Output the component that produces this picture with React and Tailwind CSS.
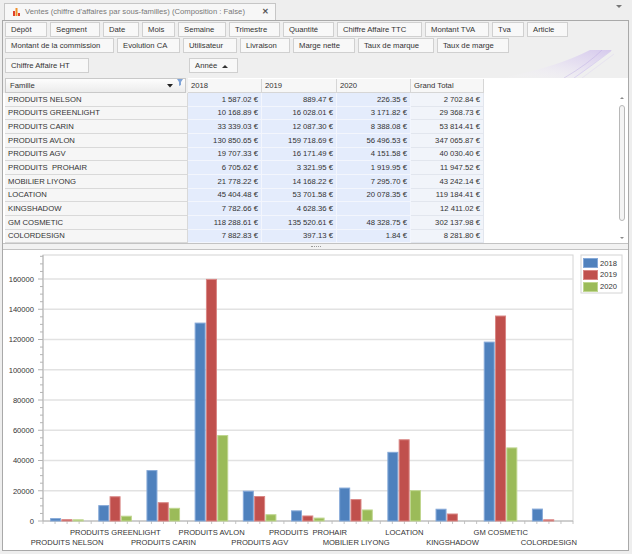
import React from 'react'

const ROW1 = [
  ['Dépôt', 'w-[42px]'],
  ['Segment', 'w-[50px]'],
  ['Date', 'w-[36px]'],
  ['Mois', 'w-[33px]'],
  ['Semaine', 'w-[48px]'],
  ['Trimestre', 'w-[51px]'],
  ['Quantité', 'w-[51px]'],
  ['Chiffre Affaire TTC', 'w-[85px]'],
  ['Montant TVA', 'w-[64px]'],
  ['Tva', 'w-[32px]'],
  ['Article', 'w-[41px]'],
]

const ROW2 = [
  ['Montant de la commission', 'w-[109px]'],
  ['Evolution CA', 'w-[63px]'],
  ['Utilisateur', 'w-[54px]'],
  ['Livraison', 'w-[50px]'],
  ['Marge nette', 'w-[62px]'],
  ['Taux de marque', 'w-[76px]'],
  ['Taux de marge', 'w-[72px]'],
]

const DATA = [
  ['PRODUITS NELSON', 1587.02, 889.47, 226.35, 2702.84],
  ['PRODUITS GREENLIGHT', 10168.89, 16028.01, 3171.82, 29368.73],
  ['PRODUITS CARIN', 33339.03, 12087.3, 8388.08, 53814.41],
  ['PRODUITS AVLON', 130850.65, 159718.69, 56496.53, 347065.87],
  ['PRODUITS AGV', 19707.33, 16171.49, 4151.58, 40030.4],
  ['PRODUITS  PROHAIR', 6705.62, 3321.95, 1919.95, 11947.52],
  ['MOBILIER LIYONG', 21778.22, 14168.22, 7295.7, 43242.14],
  ['LOCATION', 45404.48, 53701.58, 20078.35, 119184.41],
  ['KINGSHADOW', 7782.66, 4628.36, null, 12411.02],
  ['GM COSMETIC', 118288.61, 135520.61, 48328.75, 302137.98],
  ['COLORDESIGN', 7882.83, 397.13, 1.84, 8281.8],
]

const SERIES = [
  { year: '2018', fill: '#4f81bd', edge: '#86a9d8' },
  { year: '2019', fill: '#c0504d', edge: '#d98684' },
  { year: '2020', fill: '#9bbb59', edge: '#bfd68f' },
]

// heights that add up to 150px for the 11 rows
const ROW_H = ['h-[14px]', 'h-[13px]', 'h-[14px]']

function fmt(v) {
  if (v == null) return ''
  const [i, d] = v.toFixed(2).split('.')
  return `${i.replace(/\B(?=(\d{3})+(?!\d))/g, ' ')}.${d} €`
}

function Btn({ label, w }) {
  return (
    <div
      className={`${w} h-[15px] shrink-0 border border-[#d0d0d0] bg-[#f8f8f8] pl-[5px] text-[7.7px] leading-[13px] text-[#333] whitespace-nowrap`}
    >
      {label}
    </div>
  )
}

function Swoosh() {
  return (
    <svg width="130" height="28" className="absolute right-[8px] top-[29px] pointer-events-none">
      <defs>
        <linearGradient id="sw" x1="0" y1="1" x2="1" y2="0">
          <stop offset="0" stopColor="#ffffff" stopOpacity="0" />
          <stop offset="0.6" stopColor="#ded3f2" stopOpacity="0.55" />
          <stop offset="1" stopColor="#cdbdec" stopOpacity="0.75" />
        </linearGradient>
      </defs>
      <path d="M10 28 Q65 18 100 0 L122 0 Q100 16 86 28 Z" fill="url(#sw)" />
      <path d="M74 28 Q98 14 112 0" stroke="#b7a5e2" strokeOpacity="0.5" strokeWidth="0.8" fill="none" />
      <path d="M84 28 Q104 14 121 1" stroke="#c9baeb" strokeOpacity="0.6" strokeWidth="0.8" fill="none" />
      <path d="M92 28 Q108 16 124 4" stroke="#d8cdf2" strokeOpacity="0.6" strokeWidth="0.6" fill="none" />
    </svg>
  )
}

function Scrollbar() {
  return (
    <div className="mr-[1px] flex w-[10px] flex-col items-center bg-white">
      <svg width="10" height="10" className="block">
        <path d="M3 6 L5 4 L7 6 Z" fill="#8a8a8a" />
      </svg>
      <div className="mt-[2px] h-[116px] w-[6px] rounded-[3px] border border-[#b8b8b8] bg-[#f4f4f4]" />
      <div className="flex-1" />
      <svg width="10" height="10" className="block">
        <path d="M3 4 L5 6 L7 4 Z" fill="#8a8a8a" />
      </svg>
    </div>
  )
}

function Chart() {
  const L = 40
  const R = 570
  const T = 5
  const B = 271
  const k = 242 / 160000
  const cw = (R - L) / DATA.length
  const minor = []
  for (let v = 0; v <= 175000; v += 5000) minor.push(v)
  const major = [0, 20000, 40000, 60000, 80000, 100000, 120000, 140000, 160000]
  const xticks = []
  for (let i = 0; i <= DATA.length * 4; i++) xticks.push(L + (cw / 4) * i)
  const offs = [-16.5, -5.2, 6.1]

  return (
    <svg width="626" height="300" className="block">
      <rect x={L} y={T} width={R - L} height={B - T} fill="white" stroke="#d4d4d4" />
      {major.slice(1).map((v) => (
        <line key={v} x1={L} x2={R} y1={B - v * k} y2={B - v * k} stroke="#e2e2e2" strokeWidth="1.5" />
      ))}
      {minor.map((v) => (
        <line
          key={v}
          x1={v % 20000 === 0 ? L - 5 : L - 3}
          x2={L}
          y1={B - v * k}
          y2={B - v * k}
          stroke="#b4b4b4"
        />
      ))}
      {xticks.map((x, i) => (
        <line key={i} x1={x} x2={x} y1={B} y2={B + 3} stroke="#c4c4c4" />
      ))}
      <line x1={L} x2={L} y1={T} y2={B} stroke="#b4b4b4" />
      <line x1={L} x2={R} y1={B} y2={B} stroke="#b4b4b4" />
      {major.map((v) => (
        <text key={v} x="31" y={B - v * k + 2.8} textAnchor="end" fontSize="7.6" fill="#333">
          {v}
        </text>
      ))}
      {DATA.map((row, i) => {
        const c = L + cw * (i + 0.5)
        return (
          <g key={row[0]}>
            {SERIES.map((s, j) => {
              const v = row[j + 1]
              if (!v || v < 100) return null
              const h = Math.max(v * k, 1.2)
              return (
                <rect
                  key={s.year}
                  x={c + offs[j]}
                  y={B - h}
                  width="10"
                  height={h}
                  fill={s.fill}
                  stroke={s.edge}
                  strokeWidth="1"
                />
              )
            })}
            <text
              x={c}
              y={i % 2 === 0 ? 295 : 284.5}
              textAnchor="middle"
              fontSize="7.6"
              fill="#333"
              className="whitespace-pre"
            >
              {row[0]}
            </text>
          </g>
        )
      })}
      {/* legend */}
      <rect x="578" y="5" width="41" height="38" fill="white" stroke="#d4d4d4" />
      {SERIES.map((s, j) => (
        <g key={s.year}>
          <rect x="580.5" y={8.5 + j * 12} width="14" height="9" fill={s.fill} stroke={s.edge} />
          <text x="597" y={15.5 + j * 11.7} fontSize="7.6" fill="#333">
            {s.year}
          </text>
        </g>
      ))}
    </svg>
  )
}

export default function App() {
  return (
    <div className="h-[554px] w-[632px] overflow-hidden bg-[#eeeeee] font-['Liberation_Sans',Arial,sans-serif]">
      {/* tab strip */}
      <div className="flex h-[20px] items-end">
        <div className="ml-[4px] flex h-[17px] w-[272px] items-center border border-b-0 border-[#c6c6c6] bg-[#f7f7f7]">
          <svg width="7" height="8" className="ml-[8px] block shrink-0">
            <rect x="0" y="3" width="2" height="5" fill="#e0402a" />
            <rect x="2.5" y="0" width="2" height="8" fill="#f0902a" />
            <rect x="5" y="5" width="2" height="3" fill="#e0402a" />
          </svg>
          <span className="ml-[5px] text-[7.7px] text-[#777] whitespace-nowrap">
            Ventes (chiffre d'affaires par sous-familles) (Composition : False)
          </span>
          <span className="ml-auto mr-[6px] text-[8px] font-bold text-[#555]">✕</span>
        </div>
        <div className="flex-1" />
        <svg width="8" height="6" className="mb-[10px] mr-[9px] block">
          <path d="M1 1 L7 1 L4 4 Z" fill="#777" />
        </svg>
      </div>

      {/* main panel */}
      <div className="mx-[2px] h-[531px] w-[627px] border border-[#a9a9a9] bg-white">
        {/* toolbar with field buttons */}
        <div className="relative h-[57px] bg-[#efefef] pl-[2px] pt-[1px]">
          <Swoosh />
          <div className="relative flex gap-[3px]">
            {ROW1.map(([l, w]) => (
              <Btn key={l} label={l} w={w} />
            ))}
          </div>
          <div className="relative mt-[1px] flex gap-[3px]">
            {ROW2.map(([l, w]) => (
              <Btn key={l} label={l} w={w} />
            ))}
          </div>
          <div className="relative mt-[5px] flex">
            <div className="h-[15px] w-[84px] border border-[#cfcfcf] bg-[#f8f8f8] pl-[5px] text-[7.7px] leading-[13px] text-[#333]">
              Chiffre Affaire HT
            </div>
            <div className="ml-[100px] flex h-[15px] w-[49px] items-center border border-[#cfcfcf] bg-[#f8f8f8] pl-[5px] text-[7.7px] text-[#333]">
              Année
              <svg width="6" height="4" className="ml-[5px] block">
                <path d="M0 4 L3 1 L6 4 Z" fill="#333" />
              </svg>
            </div>
          </div>
        </div>

        {/* pivot grid */}
        <div className="h-[165px] bg-white">
          <div className="flex h-[15px]">
            <div className="w-[2px] bg-[#efefef]" />
            <div className="flex w-[181px] items-center border border-[#c9c9c9] bg-gradient-to-b from-[#fdfdfd] to-[#ececec] pl-[4px] text-[7.7px] text-[#333]">
              Famille
              <svg width="6" height="4" className="ml-auto block">
                <path d="M0 0 L6 0 L3 3.5 Z" fill="#222" />
              </svg>
              <svg width="6" height="8" className="mb-[6px] ml-[4px] mr-[2px] block">
                <path d="M0 0 L6 0 L4 3 L4 6 L2 7 L2 3 Z" fill="#7fa3d6" />
              </svg>
            </div>
            <div className="w-[2px] bg-[#efefef]" />
            {['2018', '2019', '2020', 'Grand Total'].map((h, i) => (
              <div
                key={h}
                className={`${i === 1 ? 'w-[75px]' : i === 3 ? 'w-[73px]' : 'w-[74px]'} mt-[1px] border-b border-r border-[#d6d6d6] bg-[#f7f7f7] pl-[3px] text-[7.7px] leading-[13px] text-[#333]`}
              >
                {h}
              </div>
            ))}
            <div className="flex-1 bg-white" />
          </div>
          <div className="flex h-[150px]">
            <div className="pl-[2px]">
              {DATA.map((row, i) => (
                <div key={row[0]} className={`${ROW_H[i % 3]} flex text-[7.7px] text-[#333]`}>
                  <div className="flex w-[183px] items-center border-b border-r border-[#d9d9d9] bg-[#f6f6f6] pl-[3px] whitespace-pre">
                    {row[0]}
                  </div>
                  {[1, 2, 3].map((j) => (
                    <div
                      key={j}
                      className={`${j === 2 ? 'w-[75px]' : 'w-[74px]'} flex items-center justify-end border-b border-r border-[#f3f6fd] bg-[#e4ecfc] pr-[3px]`}
                    >
                      {fmt(row[j])}
                    </div>
                  ))}
                  <div className="flex w-[73px] items-center justify-end border-b border-r border-[#e2e6ee] bg-[#f1f4fa] pr-[3px]">
                    {fmt(row[4])}
                  </div>
                </div>
              ))}
            </div>
            <div className="flex-1" />
            <Scrollbar />
          </div>
        </div>

        {/* splitter */}
        <div className="flex h-[7px] items-center justify-center border-b border-t border-[#c3c3c3] bg-[#f2f2f2]">
          <div className="h-[2px] w-[10px] border-t border-dotted border-[#9a9a9a]" />
        </div>

        {/* chart */}
        <div className="h-[298px] bg-white">
          <Chart />
        </div>
      </div>
    </div>
  )
}
